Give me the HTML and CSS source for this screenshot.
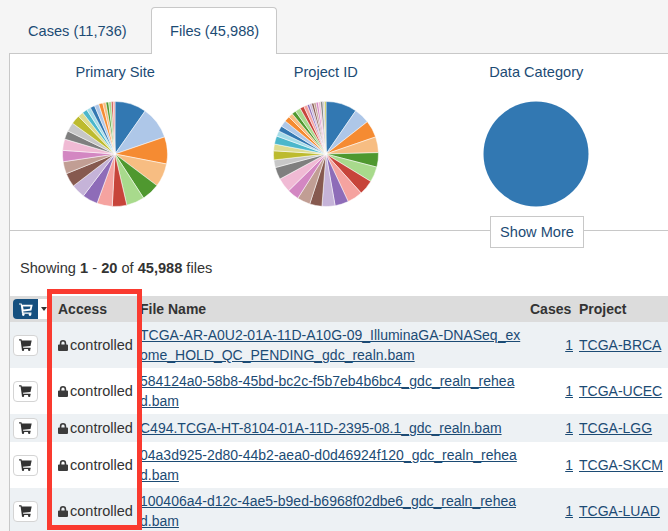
FILE: index.html
```html
<!DOCTYPE html>
<html lang="en">
<head>
<meta charset="utf-8">
<title>Files</title>
<link rel="stylesheet" href="styles.css">
</head>
<body>
<svg class="defs" width="0" height="0" aria-hidden="true">
  <symbol id="cart" viewBox="0 0 14 13">
    <path d="M0 .4h2.600l.4 1.300h10.700l-1.300 5.900-8.200.9.300 1.100h8v1.200H3L1.700 1.600H0z"/>
    <circle cx="4.300" cy="11.600" r="1.300"/>
    <circle cx="11" cy="11.600" r="1.300"/>
  </symbol>
  <symbol id="cart-line" viewBox="0 0 14 13">
    <path fill-rule="evenodd" d="M0 .4h2.600l.4 1.300h10.700l-1.300 5.900-8.200.9.300 1.100h8v1.200H3L1.700 1.600H0zM4 3.500l.6 3 6.300-.7.600-2.300z"/>
    <circle cx="4.300" cy="11.600" r="1.300"/>
    <circle cx="11" cy="11.600" r="1.300"/>
  </symbol>
  <symbol id="lock" viewBox="0 0 10 11">
    <path d="M1.800 4.400V3.200a3.200 3.200 0 0 1 6.400 0v1.200h.9c.5 0 .9.4.9.9v4.800c0 .5-.4.900-.9.900H.9c-.5 0-.9-.4-.9-.9V5.300c0-.5.400-.9.900-.9zm1.600 0h3.200V3.200a1.600 1.600 0 0 0-3.200 0z"/>
  </symbol>
</svg>

<nav class="tabs">
  <a class="tab">Cases (11,736)</a>
  <a class="tab tab-active">Files (45,988)</a>
</nav>

<main class="panel">
  <section class="charts">
    <figure class="chart">
      <figcaption>Primary Site</figcaption>
      <svg class="pie" id="pie-site" viewBox="-53 -53 106 106" width="106" height="106"></svg>
    </figure>
    <figure class="chart">
      <figcaption>Project ID</figcaption>
      <svg class="pie" id="pie-project" viewBox="-53 -53 106 106" width="106" height="106"></svg>
    </figure>
    <figure class="chart">
      <figcaption>Data Category</figcaption>
      <svg class="pie" viewBox="-53 -53 106 106" width="106" height="106"><circle r="52.500" fill="#3278b2"/></svg>
    </figure>
  </section>

  <div class="more-row">
    <button class="more-btn">Show More</button>
  </div>

  <p class="summary">Showing <b>1</b> - <b>20</b> of <b>45,988</b> files</p>

  <div class="table-wrap">
    <div class="cart-all">
      <span class="cart-all-btn"><svg width="14" height="13"><use href="#cart-line"/></svg></span>
      <span class="caret-box"><span class="caret"></span></span>
    </div>
    <table class="files">
      <thead>
        <tr>
          <th class="c-cart"></th>
          <th class="c-access">Access</th>
          <th class="c-name">File Name</th>
          <th class="c-cases">Cases</th>
          <th class="c-project">Project</th>
        </tr>
      </thead>
      <tbody>
        <tr>
          <td class="c-cart"><span class="cart-btn"><svg width="13" height="12"><use href="#cart"/></svg></span></td>
          <td class="c-access"><svg class="lock" width="10" height="11"><use href="#lock"/></svg>controlled</td>
          <td class="c-name"><a>TCGA-AR-A0U2-01A-11D-A10G-09_IlluminaGA-DNASeq_exome_HOLD_QC_PENDING_gdc_realn.bam</a></td>
          <td class="c-cases"><a>1</a></td>
          <td class="c-project"><a>TCGA-BRCA</a></td>
        </tr>
        <tr>
          <td class="c-cart"><span class="cart-btn"><svg width="13" height="12"><use href="#cart"/></svg></span></td>
          <td class="c-access"><svg class="lock" width="10" height="11"><use href="#lock"/></svg>controlled</td>
          <td class="c-name"><a>584124a0-58b8-45bd-bc2c-f5b7eb4b6bc4_gdc_realn_rehead.bam</a></td>
          <td class="c-cases"><a>1</a></td>
          <td class="c-project"><a>TCGA-UCEC</a></td>
        </tr>
        <tr>
          <td class="c-cart"><span class="cart-btn"><svg width="13" height="12"><use href="#cart"/></svg></span></td>
          <td class="c-access"><svg class="lock" width="10" height="11"><use href="#lock"/></svg>controlled</td>
          <td class="c-name"><a>C494.TCGA-HT-8104-01A-11D-2395-08.1_gdc_realn.bam</a></td>
          <td class="c-cases"><a>1</a></td>
          <td class="c-project"><a>TCGA-LGG</a></td>
        </tr>
        <tr>
          <td class="c-cart"><span class="cart-btn"><svg width="13" height="12"><use href="#cart"/></svg></span></td>
          <td class="c-access"><svg class="lock" width="10" height="11"><use href="#lock"/></svg>controlled</td>
          <td class="c-name"><a>04a3d925-2d80-44b2-aea0-d0d46924f120_gdc_realn_rehead.bam</a></td>
          <td class="c-cases"><a>1</a></td>
          <td class="c-project"><a>TCGA-SKCM</a></td>
        </tr>
        <tr>
          <td class="c-cart"><span class="cart-btn"><svg width="13" height="12"><use href="#cart"/></svg></span></td>
          <td class="c-access"><svg class="lock" width="10" height="11"><use href="#lock"/></svg>controlled</td>
          <td class="c-name"><a>100406a4-d12c-4ae5-b9ed-b6968f02dbe6_gdc_realn_rehead.bam</a></td>
          <td class="c-cases"><a>1</a></td>
          <td class="c-project"><a>TCGA-LUAD</a></td>
        </tr>
      </tbody>
    </table>
    <div class="highlight"></div>
  </div>
</main>

<script>
(function () {
  var c = ['#3278b2','#aec7e8','#f58b32','#f7bd82','#4f982f','#a8da8c','#c7443a','#f5a3a0','#8e6cb8','#c5b3d8','#86594f','#c19e94','#d387c2','#f0bad4','#7f7f7f','#c7c7c7','#bdbb2e','#dddc90','#4bb7cb','#a5dce8'];
  function draw(id, ends) {
    var svg = document.getElementById(id), prev = 0, NS = 'http://www.w3.org/2000/svg', r = 52.5;
    ends.forEach(function (deg, i) {
      var a = prev * Math.PI / 180, b = deg * Math.PI / 180;
      var p = document.createElementNS(NS, 'path');
      p.setAttribute('d', 'M0 0L' + (r * Math.sin(a)).toFixed(2) + ' ' + (-r * Math.cos(a)).toFixed(2) +
        'A' + r + ' ' + r + ' 0 0 1 ' + (r * Math.sin(b)).toFixed(2) + ' ' + (-r * Math.cos(b)).toFixed(2) + 'Z');
      p.setAttribute('fill', c[i % 20]);
      p.setAttribute('stroke', '#fff');
      p.setAttribute('stroke-width', '.5');
      svg.appendChild(p);
      prev = deg;
    });
  }
  draw('pie-site', [35,71,101,127,147,167,183,200,217,232.5,248,261.5,274,286.5,296,306,316,322,327.5,332,337,342,346.5,350,353,356,358,360]);
  draw('pie-project', [34.5,52,71,88.5,104.5,121.5,138,155,170,184.5,198,212.5,225.5,241.5,255,263.5,273.5,281,290,296,302,309,315,320,324.5,330.5,335,339,341.5,344,346.5,349,351.5,354,356.5,358.5,360]);
})();
</script>
</body>
</html>
```
FILE: styles.css
```css
* { box-sizing: border-box; }

html, body { margin: 0; height: 531px; overflow: hidden; }

body {
  background: #f5f5f5;
  font-family: "Liberation Sans", Arial, sans-serif;
  font-size: 14.6px;
  line-height: 20px;
  color: #333;
}

.defs { position: absolute; }

.tabs {
  display: flex;
  height: 54px;
  padding: 7px 0 0 9px;
}

.tab {
  width: 138px;
  height: 47px;
  margin-right: 4px;
  padding: 13px 18px 0;
  color: #1c4b74;
  white-space: nowrap;
  border: 1px solid transparent;
  border-bottom: 0;
  border-radius: 4px 4px 0 0;
}

.tab-active {
  position: relative;
  z-index: 1;
  width: 126px;
  background: #fff;
  border-color: #c8c8c8;
}

.panel {
  height: 478px;
  margin-top: -1px;
  margin-left: 9px;
  background: #fff;
  border-top: 1px solid #c8c8c8;
  border-left: 1px solid #c8c8c8;
}

.charts { display: flex; height: 176px; }

.chart {
  flex: 0 0 210.500px;
  display: flex;
  flex-direction: column;
  align-items: center;
  margin: 0;
  padding-top: 8px;
}

.chart figcaption { height: 33px; color: #1c4b74; }

.pie { display: block; margin-top: 5.500px; }

.more-row {
  position: relative;
  display: flex;
  height: 1px;
  margin-bottom: 16px;
  background: #c8c8c8;
}

.more-btn {
  position: absolute;
  left: 480px;
  top: -14px;
  width: 94px;
  height: 32px;
  padding: 0;
  font: inherit;
  color: #1c4b74;
  background: #fff;
  border: 1px solid #c8c8c8;
}

.summary { height: 49px; margin: 0 0 0 10px; padding-top: 11px; }

.table-wrap { position: relative; }

.files {
  width: 658px;
  border-collapse: collapse;
  table-layout: fixed;
  font-size: 14px;
}

.files th {
  height: 26px;
  padding: 0;
  background: #dcdcdc;
  text-align: left;
  color: #333;
}

.files td { padding: 3px 0; vertical-align: middle; line-height: 20px; }

.files tbody tr { height: 46px; }
.files tbody tr:nth-child(3) { height: 28px; }
.files tbody tr:nth-child(odd) td { background: #edf1f4; }

.c-cart { width: 38px; }
.c-access { width: 92px; }
.c-name { width: 382px; word-break: break-all; }
.c-cases { width: 57px; }
.c-project { width: 89px; }

.files th.c-access { padding-left: 10px; }
.files td.c-access { padding-left: 10px; font-size: 14.500px; white-space: nowrap; }
.files th.c-cases { padding-left: 8px; }
.files td.c-cases { padding-right: 6px; text-align: right; }
.files td.c-project { white-space: nowrap; }

.files a { color: #1c4b74; text-decoration: underline; }

.lock { margin-right: 2px; fill: #3c3c3c; vertical-align: -1px; }

.cart-btn {
  display: flex;
  align-items: center;
  justify-content: center;
  width: 25px;
  height: 21px;
  margin-left: 3px;
  background: #fff;
  border: 1px solid #d4d4d4;
  border-radius: 4px;
  fill: #333;
}

.cart-all {
  position: absolute;
  left: 3px;
  top: 3px;
  z-index: 1;
  display: flex;
}

.cart-all-btn {
  display: flex;
  align-items: center;
  justify-content: center;
  width: 25px;
  height: 20px;
  background: #16507f;
  border-radius: 4px 0 0 4px;
  fill: #fff;
}

.caret-box {
  display: flex;
  align-items: center;
  width: 10px;
  height: 20px;
  padding-left: 3px;
  background: #fff;
}

.caret {
  border: 3.500px solid transparent;
  border-top: 4px solid #333;
  border-bottom: 0;
}

.highlight {
  position: absolute;
  left: 37px;
  top: -7px;
  z-index: 2;
  width: 95px;
  height: 241px;
  border: 5px solid #fa3a2f;
  pointer-events: none;
}
```
